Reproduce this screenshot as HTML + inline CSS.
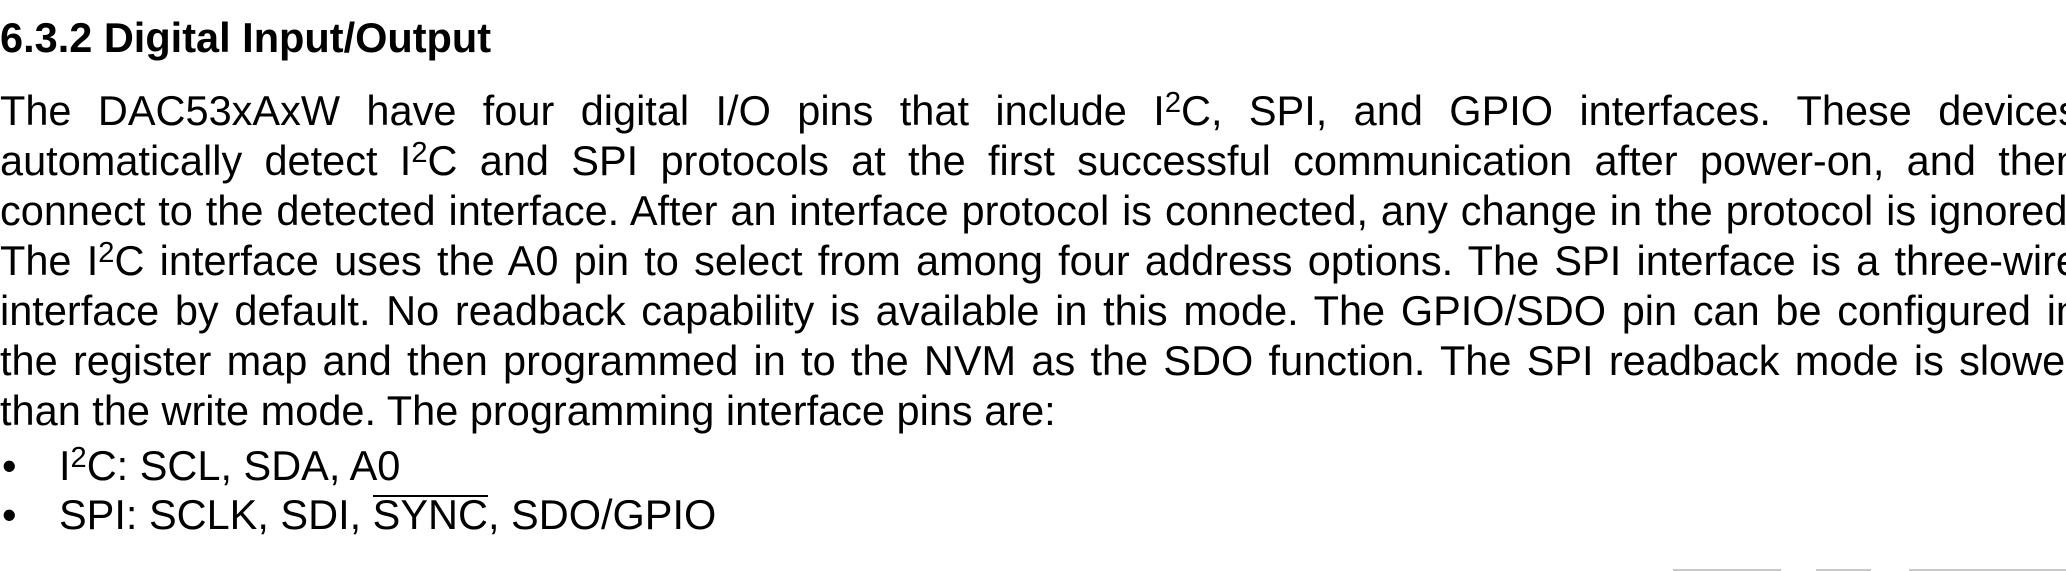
<!DOCTYPE html>
<html><head><meta charset="utf-8"><style>
html,body{margin:0;padding:0;background:#fff;width:2066px;height:571px;overflow:hidden;position:relative}
body{font-family:"Liberation Sans",Arial,sans-serif;color:#000}
.h{position:absolute;left:0;top:0;font-weight:bold;font-size:41.5px;line-height:1;white-space:nowrap}
.l{position:absolute;left:0;width:2079px;font-size:41.5px;line-height:1;white-space:nowrap;text-align:justify;text-align-last:justify}
.n{text-align-last:left}
sup{font-size:0.7em;vertical-align:0;position:relative;top:-0.45em;line-height:0}
.b{position:absolute;left:0;font-size:41.5px;line-height:1;white-space:nowrap}
.b .d{position:absolute;left:2px}
.b .t{position:absolute;left:59px}
.o{position:relative}
.o::before{content:"";position:absolute;left:0;right:0;top:4px;height:2px;background:#000}
.g{position:absolute;top:569px;height:2px;background:#c8c8c8}
</style></head><body>
<div class="h" style="top:17px">6.3.2 Digital Input/Output</div>
<div class="l" style="top:90px">The DAC53xAxW have four digital I/O pins that include I<sup>2</sup>C, SPI, and GPIO interfaces. These devices</div>
<div class="l" style="top:140px">automatically detect I<sup>2</sup>C and SPI protocols at the first successful communication after power-on, and then</div>
<div class="l" style="top:190px">connect to the detected interface. After an interface protocol is connected, any change in the protocol is ignored.</div>
<div class="l" style="top:240px">The I<sup>2</sup>C interface uses the A0 pin to select from among four address options. The SPI interface is a three-wire</div>
<div class="l" style="top:290px">interface by default. No readback capability is available in this mode. The GPIO/SDO pin can be configured in</div>
<div class="l" style="top:340px">the register map and then programmed in to the NVM as the SDO function. The SPI readback mode is slower</div>
<div class="l n" style="top:390px">than the write mode. The programming interface pins are:</div>
<div class="b" style="top:445px"><span class="d">•</span><span class="t">I<sup>2</sup>C: SCL, SDA, A0</span></div>
<div class="b" style="top:494px"><span class="d">•</span><span class="t">SPI: SCLK, SDI, <span class="o">SYNC</span>, SDO/GPIO</span></div>
<div class="g" style="left:1673px;width:108px"></div>
<div class="g" style="left:1816px;width:55px"></div>
<div class="g" style="left:1909px;width:157px"></div>
</body></html>
